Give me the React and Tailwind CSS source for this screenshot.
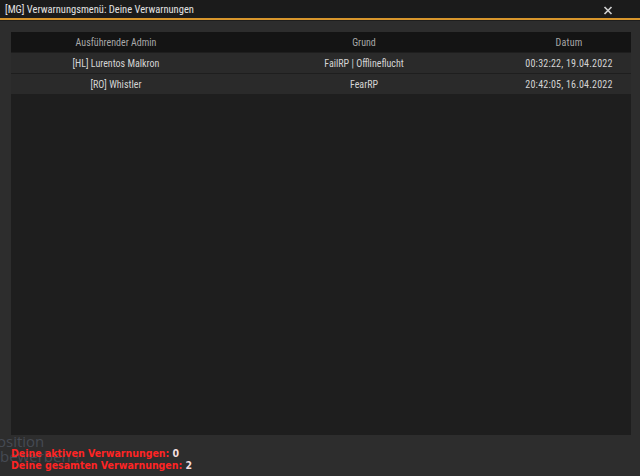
import React from "react";

const rows = [
  { admin: "[HL] Lurentos Malkron", reason: "FailRP | Offlineflucht", date: "00:32:22, 19.04.2022" },
  { admin: "[RO] Whistler", reason: "FearRP", date: "20:42:05, 16.04.2022" },
];

const App = () => {
  return (
    <div
      className="w-[640px] h-[476px] bg-[#2d2d2d] flex flex-col relative overflow-hidden"
      style={{ fontFamily: '"Roboto Condensed", "Roboto", sans-serif' }}
    >
      {/* title bar */}
      <div className="h-[18px] bg-[#1b1b1b] flex items-center justify-between pt-[3px] pl-[5px] pr-[27px]">
        <span className="text-[10.5px] text-[#e2e2e2] leading-none">[MG] Verwarnungsmenü: Deine Verwarnungen</span>
        <svg width="10" height="9" viewBox="0 0 10 9">
          <path d="M1.5 1 L8.5 8 M8.5 1 L1.5 8" stroke="#cfcfcf" strokeWidth="1.7" />
        </svg>
      </div>
      <div className="h-[2px] bg-[#d8962c]" />
      <div className="h-[1px] bg-[#1e1e1e]" />

      {/* table */}
      <div className="mt-[11px] ml-[11px] w-[620px] h-[403px] bg-[#1e1e1e] flex flex-col text-[10px]">
        <div className="h-[20px] bg-[#141414] flex items-center text-[#a8a8a8]">
          <div className="w-[210px] text-center">Ausführender Admin</div>
          <div className="w-[286px] text-center">Grund</div>
          <div className="flex-1 text-center tracking-[0.2px]">Datum</div>
        </div>
        {rows.map((r) => (
          <div key={r.date} className="h-[20px] bg-[#2a2a2a] flex items-center text-[#d4d4d4] mt-[1px]">
            <div className="w-[210px] text-center">{r.admin}</div>
            <div className="w-[286px] text-center">{r.reason}</div>
            <div className="flex-1 text-center tracking-[0.2px]">{r.date}</div>
          </div>
        ))}
      </div>

      {/* background ghost text behind the window */}
      <div
        className="absolute left-[-3px] top-[434px] text-[15px] leading-[15px] text-[#454a53]"
        style={{ fontFamily: '"Open Sans", sans-serif' }}
      >
        <div>osition</div>
        <div className="pl-[3px]">bewerben ?</div>
      </div>

      {/* counters */}
      <div
        className="relative mt-[12px] ml-[11px] text-[10.5px] leading-[12px] font-bold text-[#ff2424]"
        style={{ fontFamily: '"DejaVu Sans Condensed", "DejaVu Sans", sans-serif' }}
      >
        <div>
          Deine aktiven Verwarnungen: <span className="text-[#f2dede]">0</span>
        </div>
        <div>
          Deine gesamten Verwarnungen: <span className="text-[#f2dede]">2</span>
        </div>
      </div>
    </div>
  );
};

export default App;
